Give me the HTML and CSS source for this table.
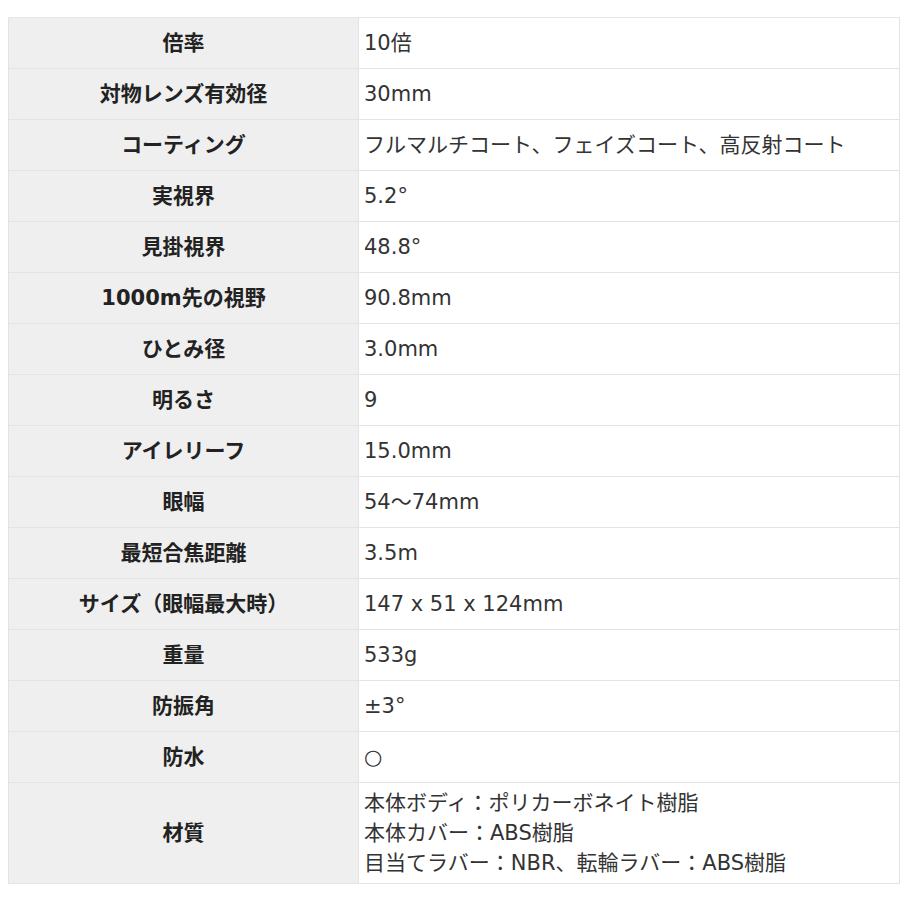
FILE: index.html
```html
<!DOCTYPE html>
<html lang="ja">
<head>
<meta charset="utf-8">
<title>仕様</title>
<link rel="stylesheet" href="styles.css">
</head>
<body>
<table class="spec">
  <tbody>
    <tr><th>倍率</th><td>10倍</td></tr>
    <tr><th>対物レンズ有効径</th><td>30mm</td></tr>
    <tr><th>コーティング</th><td>フルマルチコート、フェイズコート、高反射コート</td></tr>
    <tr><th>実視界</th><td>5.2°</td></tr>
    <tr><th>見掛視界</th><td>48.8°</td></tr>
    <tr><th>1000m先の視野</th><td>90.8mm</td></tr>
    <tr><th>ひとみ径</th><td>3.0mm</td></tr>
    <tr><th>明るさ</th><td>9</td></tr>
    <tr><th>アイレリーフ</th><td>15.0mm</td></tr>
    <tr><th>眼幅</th><td>54～74mm</td></tr>
    <tr><th>最短合焦距離</th><td>3.5m</td></tr>
    <tr><th>サイズ（眼幅最大時）</th><td>147 x 51 x 124mm</td></tr>
    <tr><th>重量</th><td>533g</td></tr>
    <tr><th>防振角</th><td>±3°</td></tr>
    <tr><th>防水</th><td>○</td></tr>
    <tr class="multi"><th>材質</th><td>本体ボディ：ポリカーボネイト樹脂<br>本体カバー：ABS樹脂<br>目当てラバー：NBR、転輪ラバー：ABS樹脂</td></tr>
  </tbody>
</table>
</body>
</html>
```

FILE: styles.css
```css
html, body {
  background: #ffffff;
}
body {
  margin: 17px 0 0 8px;
  font-family: "DejaVu Sans", "Noto Sans CJK JP", sans-serif;
  color: #333333;
}
.spec {
  border-collapse: collapse;
  width: 892px;
  table-layout: fixed;
}
.spec th,
.spec td {
  border: 1px solid #e3e3e3;
  font-size: 21px;
  line-height: 31px;
  padding: 4px 6px;
  height: 42px;
  vertical-align: middle;
}
.spec th {
  width: 337px;
  background: #efefef;
  color: #222222;
  font-weight: bold;
  text-align: center;
}
.spec td {
  background: #ffffff;
  text-align: left;
  padding-left: 5px;
  white-space: nowrap;
}
.spec .multi th,
.spec .multi td {
  line-height: 30px;
  padding-top: 5px;
  padding-bottom: 5px;
}
.spec tr:first-child th,
.spec tr:first-child td {
  border-top-color: #e6e6e6;
}
```
